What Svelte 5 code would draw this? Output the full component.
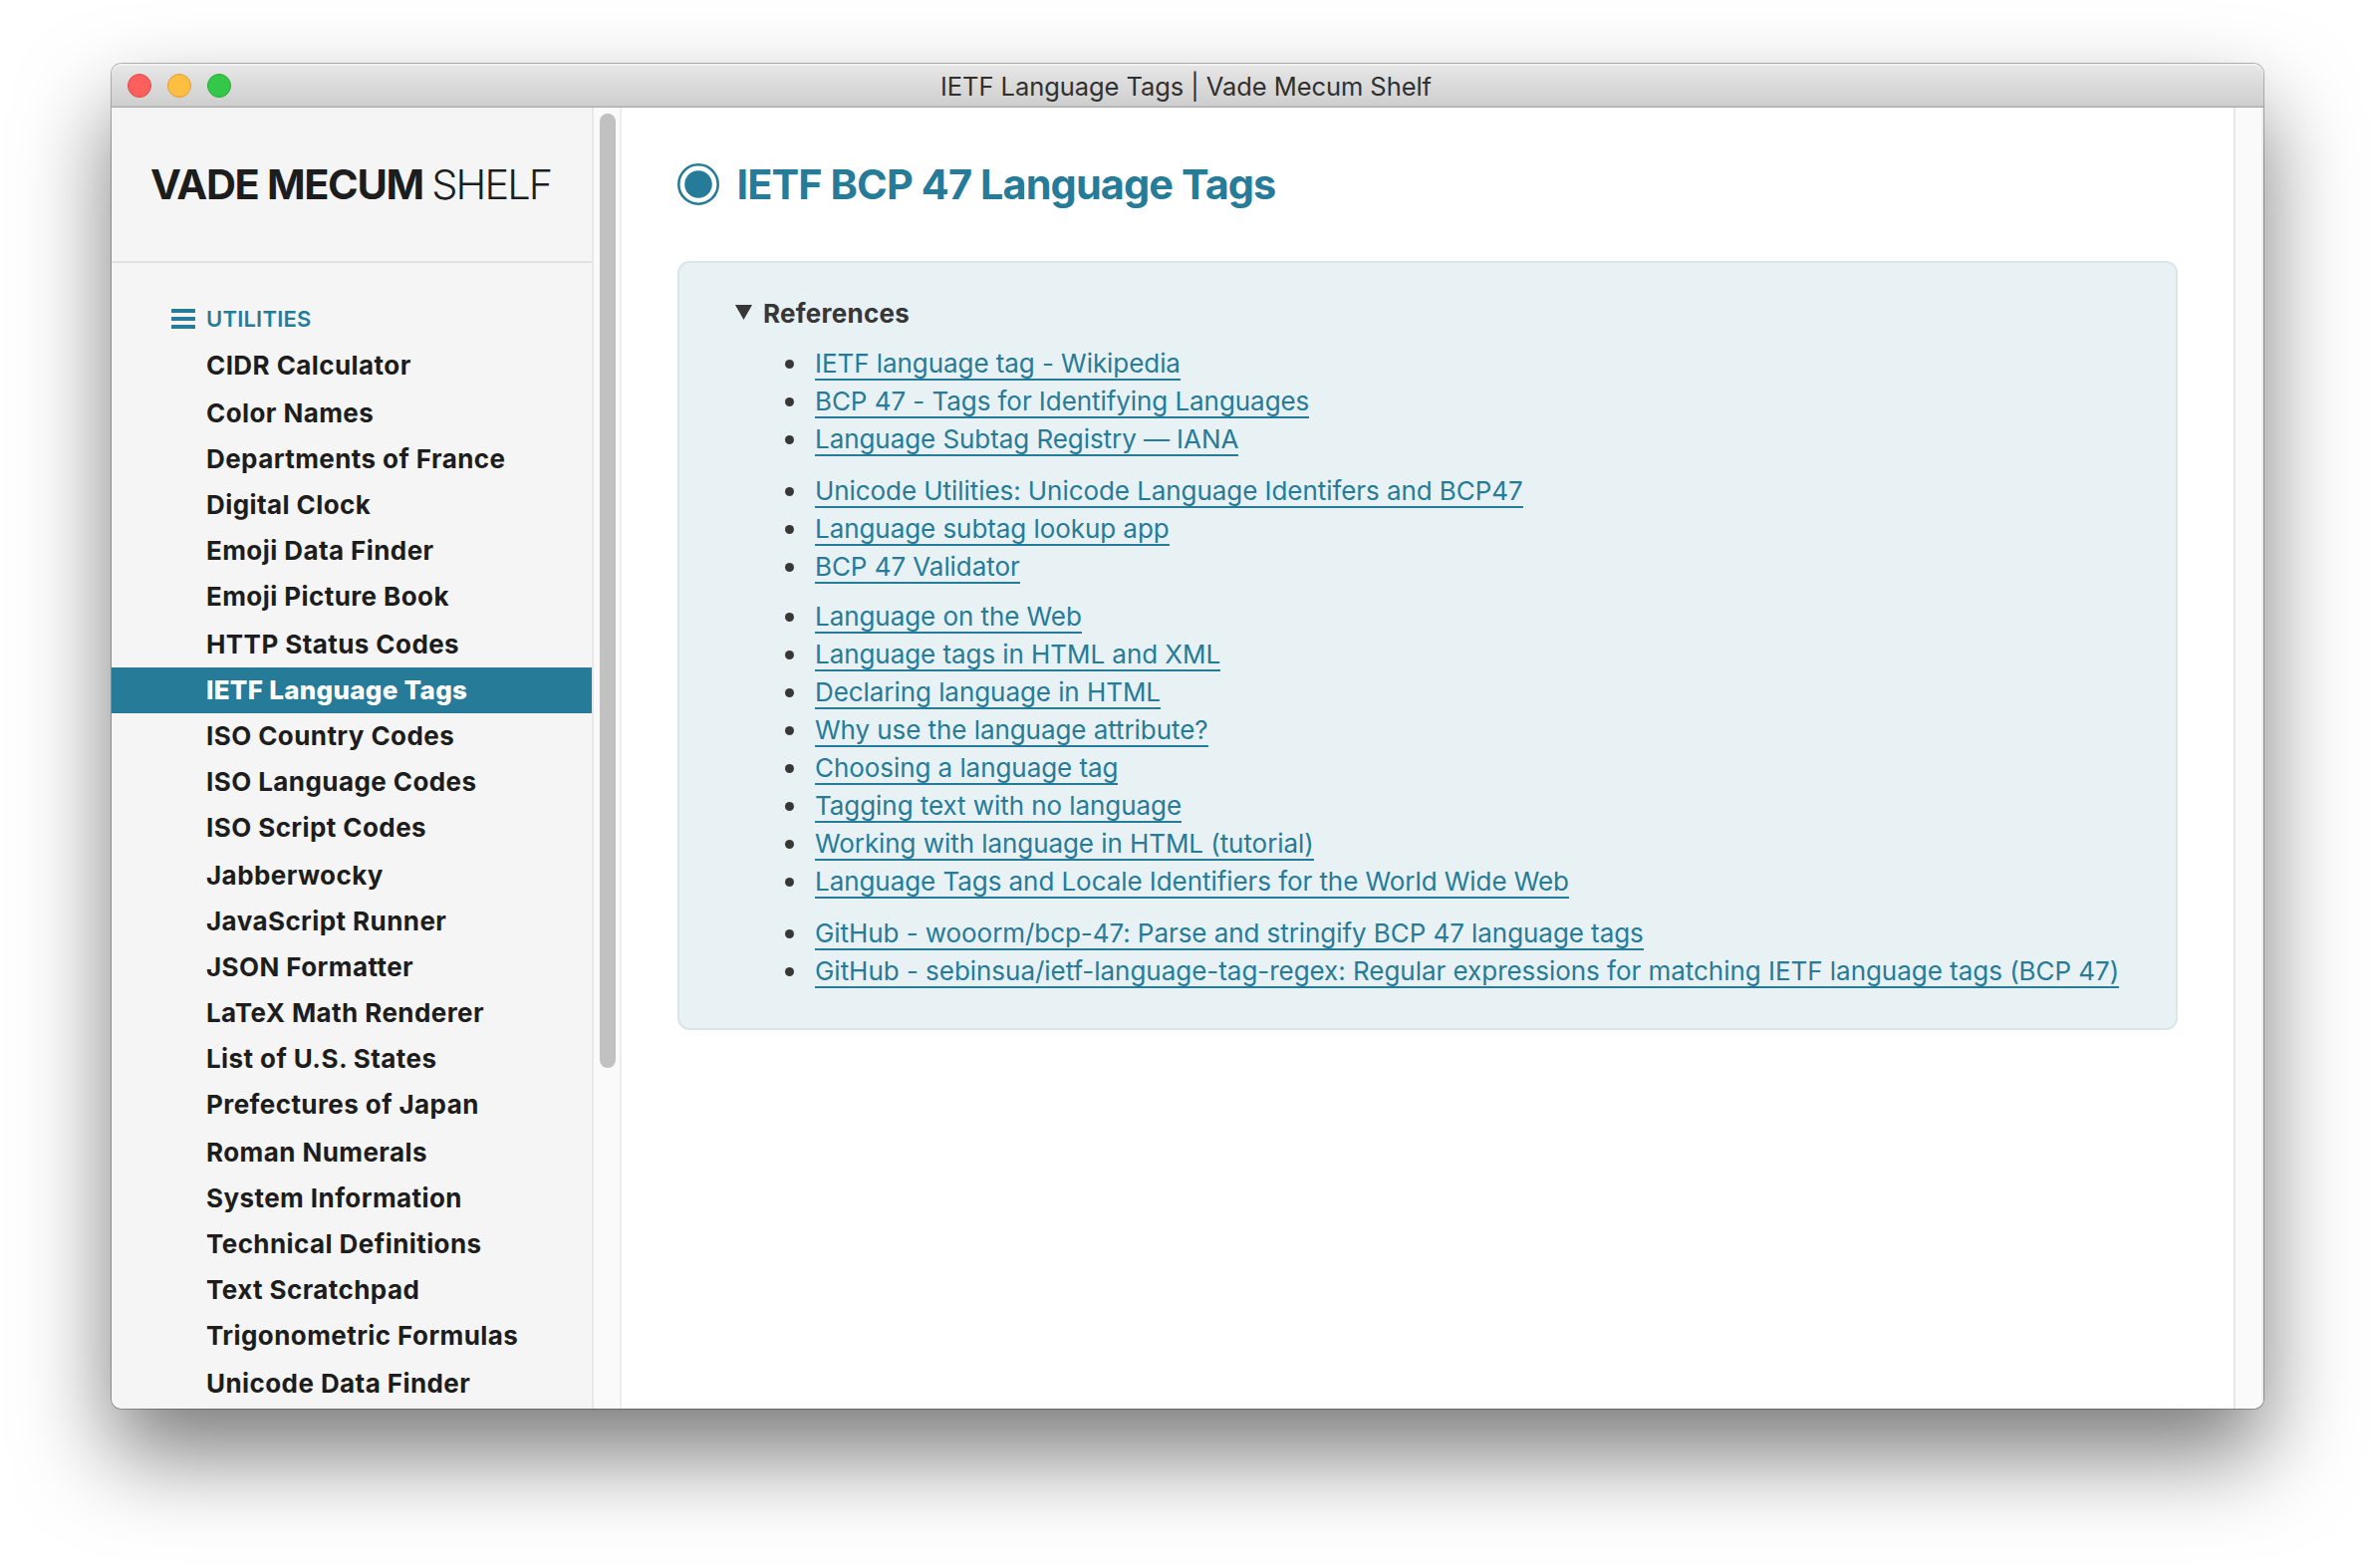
<script>
  const utilities = [
    'CIDR Calculator', 'Color Names', 'Departments of France', 'Digital Clock',
    'Emoji Data Finder', 'Emoji Picture Book', 'HTTP Status Codes', 'IETF Language Tags',
    'ISO Country Codes', 'ISO Language Codes', 'ISO Script Codes', 'Jabberwocky',
    'JavaScript Runner', 'JSON Formatter', 'LaTeX Math Renderer', 'List of U.S. States',
    'Prefectures of Japan', 'Roman Numerals', 'System Information', 'Technical Definitions',
    'Text Scratchpad', 'Trigonometric Formulas', 'Unicode Data Finder',
  ];
  const active = 'IETF Language Tags';
  const tall = new Set([0, 5, 10, 16, 21]);

  const groups = [
    ['IETF language tag - Wikipedia', 'BCP 47 - Tags for Identifying Languages', 'Language Subtag Registry — IANA'],
    ['Unicode Utilities: Unicode Language Identifers and BCP47', 'Language subtag lookup app', 'BCP 47 Validator'],
    [
      'Language on the Web', 'Language tags in HTML and XML', 'Declaring language in HTML',
      'Why use the language attribute?', 'Choosing a language tag', 'Tagging text with no language',
      'Working with language in HTML (tutorial)', 'Language Tags and Locale Identifiers for the World Wide Web',
    ],
    [
      'GitHub - wooorm/bcp-47: Parse and stringify BCP 47 language tags',
      'GitHub - sebinsua/ietf-language-tag-regex: Regular expressions for matching IETF language tags (BCP 47)',
    ],
  ];
</script>

<div class="desktop">
  <div class="window">
    <header class="titlebar">
      <div class="lights"><i class="close"></i><i class="min"></i><i class="max"></i></div>
      <span class="title">IETF Language Tags | Vade Mecum Shelf</span>
    </header>
    <div class="body">
      <aside>
        <div class="brand"><strong>VADE MECUM</strong> <span>SHELF</span></div>
        <nav>
          <h2>
            <svg width="24" height="20" viewBox="0 0 24 20" fill="#267b99"><rect width="24" height="4" rx=".6" /><rect y="8" width="24" height="4" rx=".6" /><rect y="16" width="24" height="4" rx=".6" /></svg>
            <span>UTILITIES</span>
          </h2>
          <ul>
            {#each utilities as name, i}
              <li class:tall={tall.has(i)} class:active={name === active}><span>{name}</span></li>
            {/each}
          </ul>
        </nav>
      </aside>
      <div class="track left"><div class="thumb"></div></div>
      <main>
        <h1>
          <svg width="42" height="42" viewBox="0 0 42 42"><circle cx="21" cy="21" r="19.7" fill="none" stroke="#267b99" stroke-width="2.6" /><circle cx="21" cy="21" r="13.8" fill="#267b99" /></svg>
          <span>IETF BCP 47 Language Tags</span>
        </h1>
        <section class="card">
          <h3>
            <svg width="17" height="15" viewBox="0 0 17 15"><path d="M0 0H17L8.5 15Z" fill="#373737" /></svg>
            <span>References</span>
          </h3>
          {#each groups as group}
            <ul>
              {#each group as link}
                <li><a href="#ref">{link}</a></li>
              {/each}
            </ul>
          {/each}
        </section>
      </main>
      <div class="track right"></div>
    </div>
  </div>
</div>

<style>
  :global(body) { margin: 0; background: #fff; }
  .desktop {
    box-sizing: border-box; width: 2384px; height: 1574px; padding: 64px 112px 160px;
    overflow: hidden; background: #fff;
    font-family: Inter, "Liberation Sans", sans-serif; font-size: 26px; color: #1d1d1d;
  }
  ul, h1, h2, h3 { margin: 0; padding: 0; list-style: none; }
  svg { display: block; flex: none; }
  .window {
    display: flex; flex-direction: column; height: 1350px; border-radius: 10px; background: #fff;
    box-shadow: 0 0 0 1px rgba(0, 0, 0, .24), 0 0 2px rgba(0, 0, 0, .15), 0 46px 92px rgba(0, 0, 0, .52);
  }
  .titlebar {
    box-sizing: border-box; position: relative; flex: none; display: flex; align-items: center; justify-content: center;
    height: 44px; border-radius: 10px 10px 0 0; border-bottom: 1px solid #a9a9a9;
    background: linear-gradient(#e7e7e7, #cecece);
    box-shadow: inset 0 2px 0 rgba(255, 255, 255, .45), inset 0 -1px 0 #c2c2c2;
  }
  .lights { position: absolute; left: 16px; top: 10px; display: flex; gap: 16px; }
  .lights i { box-sizing: border-box; width: 24px; height: 24px; border-radius: 50%; border: 1px solid; }
  .lights .close { background: #fc605c; border-color: #e04744; }
  .lights .min { background: #fdbe41; border-color: #de9e34; }
  .lights .max { background: #34c84a; border-color: #27a933; }
  .title { padding: 3px 3px 0 0; color: #303030; font-size: 25.5px; line-height: 44px; letter-spacing: -.07px; white-space: nowrap; }
  .body { flex: 1; display: flex; min-height: 0; overflow: hidden; border-radius: 0 0 10px 10px; }
  aside { flex: none; width: 482px; background: #f5f5f5; overflow: hidden; }
  .brand {
    box-sizing: border-box; height: 156px; padding: 46px 0 0 39px; border-bottom: 2px solid #e0e0e0;
    font-size: 41.5px; line-height: 62px; letter-spacing: -1.35px; white-space: nowrap;
  }
  .brand strong { font-weight: 700; }
  .brand span { margin-left: -2px; font-weight: 270; letter-spacing: -1.85px; }
  nav { padding-top: 37px; }
  nav h2 { display: flex; align-items: center; gap: 11px; height: 38px; padding-left: 60px; color: #267b99; font-size: 22px; font-weight: 630; letter-spacing: .22px; }
  nav li { height: 46px; padding-left: 95px; font-weight: 650; line-height: 46px; letter-spacing: .42px; white-space: nowrap; }
  nav ul { padding-top: 5px; }
  nav li.tall { margin-bottom: 2px; }
  nav li.active { background: #267b99; color: #fff; font-weight: 760; letter-spacing: .28px; }
  .track { box-sizing: border-box; flex: none; width: 30px; background: #fafafa; border: solid #e7e7e7; border-width: 0 2px; }
  .track.right { border-right-color: #ededed; }
  .track.left { padding: 6px 0 0 6px; border-right-color: #ededed; }
  .thumb { width: 16px; height: 958px; border-radius: 8px; background: #c1c1c1; }
  main { flex: 1; padding: 46px 56px 0; }
  h1 { display: flex; align-items: center; gap: 17.5px; height: 62px; color: #267b99; font-size: 41.5px; font-weight: 700; letter-spacing: -.93px; white-space: nowrap; }
  .card {
    box-sizing: border-box; height: 772px; margin-top: 46px; padding: 31px 0 0 56px;
    border: 2px solid #dae5e8; border-radius: 12px; background: #e8f1f4; color: #373737;
  }
  .card h3 { display: flex; align-items: center; gap: 11px; height: 38px; margin-bottom: 13px; font-size: 26px; font-weight: 650; letter-spacing: .25px; }
  .card h3 svg { margin-top: -2px; }
  .card ul { padding-left: 80px; }
  .card ul + ul { margin-top: 14px; }
  .card ul:nth-of-type(3) { margin-top: 12px; }
  .card li { position: relative; height: 38px; line-height: 38px; white-space: nowrap; }
  .card li::before { content: ""; position: absolute; left: -30.5px; top: 15px; width: 9px; height: 9px; border-radius: 50%; background: #373737; }
  .card a { display: inline-block; height: 34px; border-bottom: 2px solid #267b99; color: #267b99; font-weight: 430; letter-spacing: -.065px; text-decoration: none; }
  .card ul:last-child li:last-child a { letter-spacing: -.035px; }
</style>
